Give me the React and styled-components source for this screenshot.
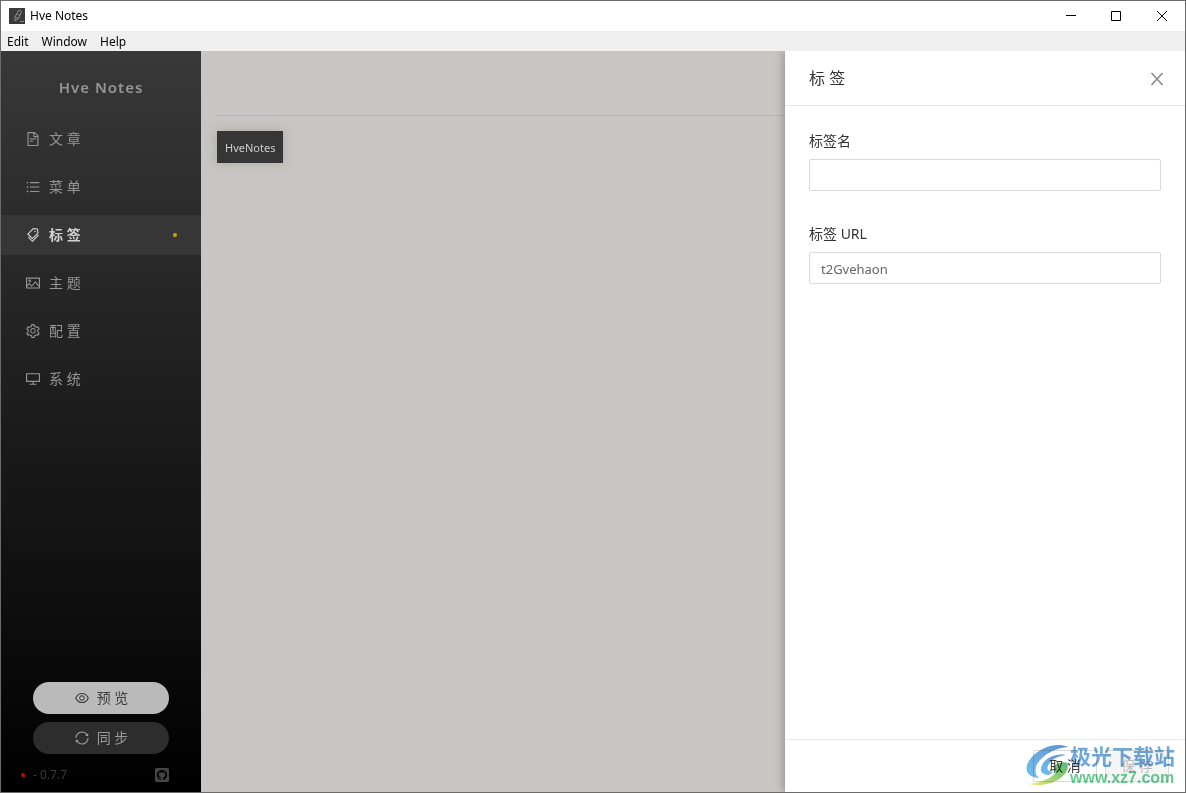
import React, { useState } from 'react'
import styled, { createGlobalStyle } from 'styled-components'
import {
  AiOutlineFileText,
  AiOutlineUnorderedList,
  AiOutlineTags,
  AiOutlinePicture,
  AiOutlineSetting,
  AiOutlineDesktop,
  AiOutlineEye,
  AiOutlineSync,
} from 'react-icons/ai'
import { FaGithubSquare } from 'react-icons/fa'

const GlobalStyle = createGlobalStyle`
  * {
    box-sizing: border-box;
  }
  body {
    margin: 0;
    font-family: 'Noto Sans', 'Noto Sans CJK SC', sans-serif;
    font-size: 14px;
    line-height: 22px;
    color: #333;
  }
  button, input {
    font: inherit;
    color: inherit;
  }
`

const Frame = styled.div`
  position: relative;
  display: flex;
  flex-direction: column;
  height: 100vh;
  border: 1px solid #6b6b6b;
  background: #fff;
`

const TitleBar = styled.header`
  display: flex;
  align-items: center;
  height: 30px;
  flex-shrink: 0;
  padding-left: 8px;
  gap: 5px;
  font-size: 12px;
  color: #000;
`

const WindowName = styled.span`
  flex: 1;
`

const WindowButtons = styled.div`
  display: flex;
`

const WindowButton = styled.button`
  display: flex;
  align-items: center;
  justify-content: center;
  width: 46px;
  height: 30px;
  padding: 0;
  border: 0;
  background: none;
`

const MenuBar = styled.nav`
  display: flex;
  align-items: center;
  height: 20px;
  flex-shrink: 0;
  gap: 13px;
  padding: 2px 0 0 6px;
  background: #efefef;
`

const MenuButton = styled.button`
  padding: 0;
  border: 0;
  background: none;
  font-size: 12px;
  line-height: 18px;
  color: #000;
`

const Body = styled.div`
  display: flex;
  flex: 1;
  min-height: 0;
  overflow: hidden;
`

const Sidebar = styled.aside`
  display: flex;
  flex-direction: column;
  width: 200px;
  flex-shrink: 0;
  background: linear-gradient(#383838, #000);
`

const Brand = styled.h1`
  margin: 0;
  padding: 24px 0 20px;
  font-size: 15px;
  line-height: 24px;
  font-weight: 600;
  letter-spacing: 1px;
  text-align: center;
  color: #959595;
`

const NavList = styled.nav`
  display: flex;
  flex-direction: column;
  flex: 1;
  gap: 8px;
`

const NavItem = styled.a`
  display: flex;
  align-items: center;
  height: 40px;
  padding: 0 24px;
  gap: 8px;
  text-decoration: none;
  color: ${props => props.$active ? '#d2d2d2' : '#969696'};
  background: ${props => props.$active ? '#363636' : 'transparent'};
  font-weight: ${props => props.$active ? 600 : 400};
`

const NavLabel = styled.span`
  flex: 1;
`

const Dot = styled.span`
  width: 4px;
  height: 4px;
  border-radius: 50%;
  background: ${props => props.$color};
`

const SideActions = styled.div`
  display: flex;
  flex-direction: column;
  gap: 8px;
  padding: 0 32px;
`

const PillButton = styled.button`
  display: flex;
  align-items: center;
  justify-content: center;
  gap: 7px;
  height: 32px;
  border: 0;
  border-radius: 16px;
  color: ${props => props.$light ? '#3c3c3c' : '#9a9a9a'};
  background: ${props => props.$light ? '#bababa' : '#2d2d2d'};
`

const SideFooter = styled.div`
  display: flex;
  align-items: center;
  gap: 8px;
  padding: 10px 31px 6px 20px;
  font-size: 12px;
  color: #3c3c3c;
`

const Version = styled.span`
  flex: 1;
`

const GithubLink = styled.a`
  display: flex;
  color: #444;
`

const Main = styled.main`
  flex: 1;
  min-width: 0;
  padding-left: 16px;
  background: #c8c6c4;
`

const Toolbar = styled.div`
  height: 65px;
  margin-bottom: 15px;
  border-bottom: 1px solid #b5b4b2;
`

const Tag = styled.button`
  height: 32px;
  padding: 2px 8px 0;
  border: 0;
  font-size: 11px;
  color: #cfcfcf;
  background: #363636;
  box-shadow: 0 0 12px rgba(90, 80, 60, 0.25);
`

const Drawer = styled.section`
  display: flex;
  flex-direction: column;
  width: 400px;
  flex-shrink: 0;
  background: #fff;
  box-shadow: -2px 0 8px rgba(0, 0, 0, 0.25);
  z-index: 1;
`

const DrawerHeader = styled.div`
  display: flex;
  align-items: center;
  justify-content: space-between;
  height: 55px;
  padding: 0 20px 0 24px;
  border-bottom: 1px solid #e8e8e8;
`

const DrawerTitle = styled.h2`
  margin: 0;
  font-size: 16px;
  line-height: 22px;
  font-weight: 400;
`

const CloseButton = styled.button`
  display: flex;
  padding: 2px 0 0;
  border: 0;
  background: none;
  color: #8c8c8c;
`

const Form = styled.form`
  display: flex;
  flex-direction: column;
  flex: 1;
  gap: 32px;
  padding: 24px;
`

const Field = styled.label`
  display: flex;
  flex-direction: column;
  gap: 7px;
`

const TextInput = styled.input`
  width: 100%;
  height: 32px;
  padding: 2px 11px 0;
  border: 1px solid #d9d9d9;
  border-radius: 2px;
  background: #fff;
  font-size: 13px;
  color: #666;
`

const DrawerFooter = styled.div`
  display: flex;
  justify-content: flex-end;
  gap: 8px;
  padding: 10px 16px;
  border-top: 1px solid #e8e8e8;
`

const FooterButton = styled.button`
  width: 64px;
  height: 32px;
  padding: 0;
  border: 1px solid #d9d9d9;
  border-radius: 2px;
  color: #404040;
  background: #fff;

  &:disabled {
    color: #bdbdbd;
    background: #f5f5f5;
  }
`

const Watermark = styled.div`
  position: absolute;
  right: 10px;
  bottom: 4px;
  z-index: 2;
  display: flex;
  align-items: center;
  opacity: 0.8;
  mix-blend-mode: multiply;
  pointer-events: none;
`

const WatermarkText = styled.div`
  display: flex;
  flex-direction: column;
  font-weight: 700;
`

const SiteName = styled.span`
  font-family: 'Noto Sans CJK SC', sans-serif;
  font-size: 21px;
  line-height: 26px;
  color: #4b92d2;
`

const SiteUrl = styled.span`
  font-family: 'Liberation Sans', sans-serif;
  font-size: 16px;
  line-height: 20px;
  color: #3fbf74;
`

const NAV = [
  { key: 'articles', label: '文 章', icon: AiOutlineFileText },
  { key: 'menu', label: '菜 单', icon: AiOutlineUnorderedList },
  { key: 'tags', label: '标 签', icon: AiOutlineTags },
  { key: 'theme', label: '主 题', icon: AiOutlinePicture },
  { key: 'setting', label: '配 置', icon: AiOutlineSetting },
  { key: 'system', label: '系 统', icon: AiOutlineDesktop },
]

function AppIcon() {
  return (
    <svg width="16" height="16" viewBox="0 0 16 16" fill="none">
      <rect width="16" height="16" fill="#3a3a3a" />
      <path d="M6 13V9L9.500 2.500Q11.500 1.500 12.500 3.500L9.500 10.500L6 13M8.500 6L11 7.500M6.500 9L9 10.500" stroke="#a5a5a5" strokeWidth="0.8" />
      <path d="M11 13.500H15" stroke="#888" />
    </svg>
  )
}

function SiteLogo() {
  return (
    <svg width="44" height="42" viewBox="0 0 44 42">
      <defs>
        <linearGradient id="blue" x1="0" y1="1" x2="1" y2="0">
          <stop offset="0" stopColor="#4fb0ea" />
          <stop offset="1" stopColor="#3579c6" />
        </linearGradient>
        <linearGradient id="green" x1="0" y1="1" x2="1" y2="0">
          <stop offset="0" stopColor="#f4e04c" />
          <stop offset="0.5" stopColor="#7cc653" />
          <stop offset="1" stopColor="#2aa84f" />
        </linearGradient>
      </defs>
      <path d="M42 3C31-2 15 3 6 13C-3 23-1 33 13 34C8 30 8 22 15 15C22 8 31 4 42 3Z" fill="url(#blue)" />
      <path d="M40 11C30 9 19 14 16 21C13 27 16 31 23 31L27 28C21 28 20 24 23 20C26 15 32 12 40 11Z" fill="url(#blue)" />
      <path d="M3 40C17 38 26 34 30 28L27 23C31 19 37 17 41 19C46 29 27 45 3 40Z" fill="url(#green)" />
    </svg>
  )
}

function App() {
  const [active, setActive] = useState('tags')
  const [name, setName] = useState('')
  const [slug, setSlug] = useState('t2Gvehaon')

  return (
    <Frame>
      <GlobalStyle />
      <TitleBar>
        <AppIcon />
        <WindowName>Hve Notes</WindowName>
        <WindowButtons>
          <WindowButton aria-label="Minimize">
            <svg width="11" height="11" stroke="#000"><path d="M1 4.500H11" /></svg>
          </WindowButton>
          <WindowButton aria-label="Maximize">
            <svg width="11" height="11" stroke="#000" fill="none"><path d="M0.500 0.500H9.500V9.500H0.500Z" /></svg>
          </WindowButton>
          <WindowButton aria-label="Close">
            <svg width="11" height="11" stroke="#000"><path d="M0 0L10 10M10 0L0 10" /></svg>
          </WindowButton>
        </WindowButtons>
      </TitleBar>
      <MenuBar>
        <MenuButton>Edit</MenuButton>
        <MenuButton>Window</MenuButton>
        <MenuButton>Help</MenuButton>
      </MenuBar>
      <Body>
        <Sidebar>
          <Brand>Hve Notes</Brand>
          <NavList>
            {NAV.map(({ key, label, icon: Icon }) => (
              <NavItem key={key} href={`#${key}`} $active={key === active} onClick={() => setActive(key)}>
                <Icon size={16} />
                <NavLabel>{label}</NavLabel>
                {key === active && <Dot $color="#d0a010" />}
              </NavItem>
            ))}
          </NavList>
          <SideActions>
            <PillButton $light><AiOutlineEye size={16} />预 览</PillButton>
            <PillButton><AiOutlineSync size={16} />同 步</PillButton>
          </SideActions>
          <SideFooter>
            <Dot $color="#d00000" />
            <Version>- 0.7.7</Version>
            <GithubLink href="#github" aria-label="GitHub"><FaGithubSquare size={16} /></GithubLink>
          </SideFooter>
        </Sidebar>
        <Main>
          <Toolbar />
          <Tag>HveNotes</Tag>
        </Main>
        <Drawer>
          <DrawerHeader>
            <DrawerTitle>标 签</DrawerTitle>
            <CloseButton aria-label="Close drawer">
              <svg width="16" height="16" stroke="currentColor" strokeWidth="1.7"><path d="M2.500 2L13.500 14M13.500 2L2.500 14" /></svg>
            </CloseButton>
          </DrawerHeader>
          <Form>
            <Field>
              标签名
              <TextInput value={name} onChange={e => setName(e.target.value)} />
            </Field>
            <Field>
              标签 URL
              <TextInput value={slug} onChange={e => setSlug(e.target.value)} />
            </Field>
          </Form>
          <DrawerFooter>
            <FooterButton>取 消</FooterButton>
            <FooterButton disabled>保 存</FooterButton>
          </DrawerFooter>
        </Drawer>
      </Body>
      <Watermark>
        <SiteLogo />
        <WatermarkText>
          <SiteName>极光下载站</SiteName>
          <SiteUrl>www.xz7.com</SiteUrl>
        </WatermarkText>
      </Watermark>
    </Frame>
  )
}

export default App
